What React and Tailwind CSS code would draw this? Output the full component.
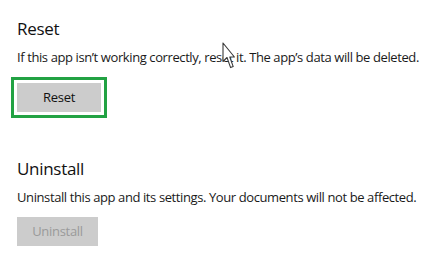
import React from 'react';

// windows-style arrow pointer drawn over the description text
const Cursor = () => (
  <svg
    className="absolute left-[222px] top-[42px]"
    width="15"
    height="28"
    viewBox="0 0 15 28"
  >
    <path
      d="M1 1 L1 19.5 L5 15.5 L8.6 25.6 L11.2 24.6 L7.8 15 L12.4 15 Z"
      fill="#fff"
      stroke="#3a3a3a"
      strokeWidth="1.1"
      strokeLinejoin="round"
    />
  </svg>
);

const Section = ({ title, text, children }) => (
  <div className="flex flex-col">
    <h2 className="text-[17px] leading-[24px] tracking-[-0.3px] text-[#111]">{title}</h2>
    <p className="mt-[7px] whitespace-nowrap text-[13px] leading-[18px] tracking-[-0.4px] text-[#1a1a1a]">
      {text}
    </p>
    {children}
  </div>
);

export default function App() {
  return (
    <div
      className="relative w-[447px] h-[261px] overflow-hidden bg-white pl-[17px] pt-[17px]"
      style={{ fontFamily: '"Open Sans", "Noto Sans", sans-serif' }}
    >
      <Section
        title="Reset"
        text="If this app isn’t working correctly, reset it. The app’s data will be deleted."
      >
        <div className="mt-[11px] -ml-[6px] w-fit border-[3px] border-[#22a243] p-[3px]">
          <button className="block w-[84px] h-[29px] bg-[#cccccc] text-[13px] tracking-[-0.3px] text-[#111]">
            Reset
          </button>
        </div>
      </Section>

      <div className="mt-[39px]">
        <Section
          title="Uninstall"
          text="Uninstall this app and its settings. Your documents will not be affected."
        >
          <div className="mt-[11px]">
            <button className="block w-[81px] h-[29px] bg-[#cccccc] text-[13px] tracking-[-0.3px] text-[#9a9a9a]">
              Uninstall
            </button>
          </div>
        </Section>
      </div>

      <Cursor />
    </div>
  );
}
